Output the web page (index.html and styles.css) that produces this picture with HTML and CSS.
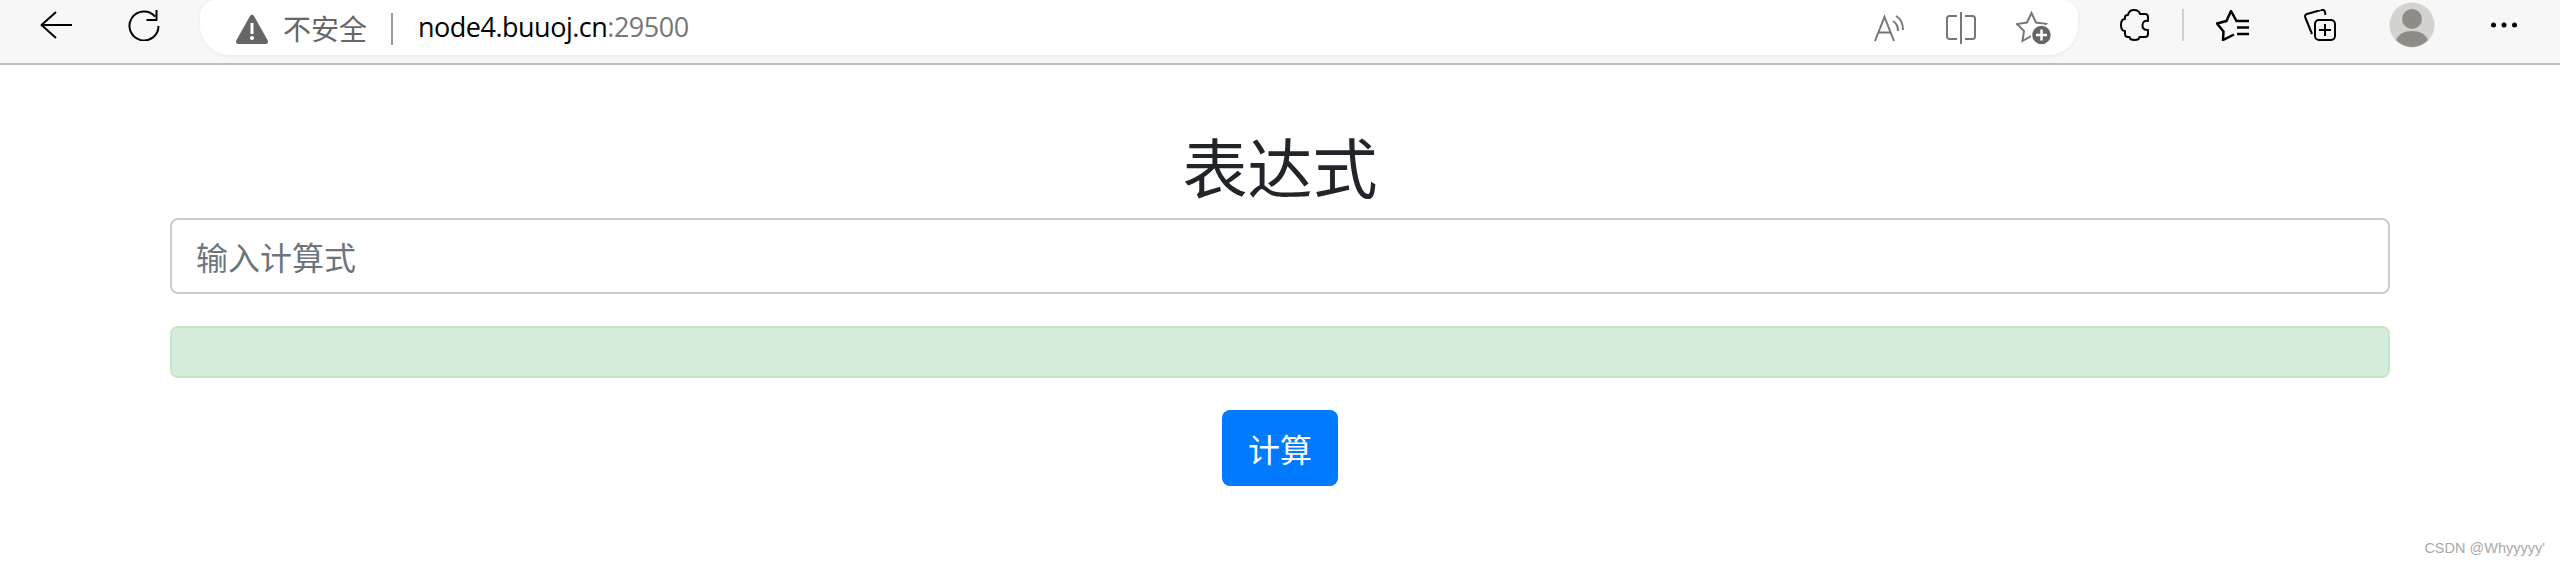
FILE: index.html
```html
<!DOCTYPE html>
<html>
<head>
  <meta charset="UTF-8">
  <title>表达式</title>
  <link rel="stylesheet" href="styles.css">
</head>
<body>
  <div class="toolbar">
    <svg class="icon icon--back" width="32" height="28" viewBox="0 0 32 28"><path d="M16 1 1.5 14 16 27M1.5 14H32"/></svg>
    <svg class="icon icon--reload" width="32" height="32" viewBox="0 0 32 32"><path d="M30.5 17A14.5 14.5 0 1 1 27 7.5M28.5 1v10h-10"/></svg>

    <div class="address">
      <svg class="address__warn" width="32" height="30" viewBox="0 0 32 30">
        <path fill="#666" d="M14 2Q16-1 18 2L31.5 26Q33 30 29 30H3Q-1 30 .5 26Z"/>
        <rect x="14.5" y="9" width="3" height="11" fill="#fff"/>
        <circle cx="16" cy="24" r="2" fill="#fff"/>
      </svg>
      <span class="address__status">不安全</span>
      <span class="address__sep"></span>
      <span class="address__url">node4.buuoj.cn<span class="address__port">:29500</span></span>

      <div class="address__tools">
        <svg class="tool tool--read" width="30" height="28" viewBox="0 0 30 28"><path d="M1 27 10.5 3 20 27M4.5 18.5h12M19 7q5 3 5 10M22 2q7 4 7 14"/></svg>
        <svg class="tool tool--split" width="30" height="32" viewBox="0 0 30 32"><path d="M11 4H3.5A2.5 2.5 0 0 0 1 6.5v18A2.5 2.5 0 0 0 3.5 27H11M19 4h7.5A2.5 2.5 0 0 1 29 6.5v18a2.5 2.5 0 0 1-2.5 2.5H19M15 0v32"/></svg>
        <svg class="tool tool--fav" width="36" height="34" viewBox="0 0 36 34">
          <path d="M15.5 2 20 11.5 30 13 23 20 24.5 30 15.5 25 6.5 30 8 20 1 13 11 11.5Z"/>
          <circle class="tool__badge" cx="25.5" cy="24" r="10"/>
          <path class="tool__plus" d="M25.5 18.5v11M20 24h11"/>
        </svg>
      </div>
    </div>

    <svg class="icon icon--ext" width="29" height="32" viewBox="0 0 29 32"><path d="M8 6Q9 1 14 1T20 5H25Q28 5 28 8V12Q23 11 22.500 16T28 21V25Q28 28 25 28H19.500Q19 31 14.500 31T9.500 28H8Q5 28 5 25V22Q1 22 1 16T5 10V8Q5 6 8 6Z"/></svg>
    <span class="toolbar__sep"></span>
    <svg class="icon icon--list" width="33" height="31" viewBox="0 0 33 31"><path class="icon__bars" d="M21 12 15 1 10.500 11 1 13.500 7.500 21.500 7 30 18 24.500"/><path class="icon__bars" d="M21 11H33M21 17.500H33M21 24H33"/></svg>
    <svg class="icon icon--collect" width="32" height="32" viewBox="0 0 32 32">
      <path d="M8 25 1.5 9Q0 6 3 5L17 1Q20 0 21 3L21.5 6"/>
      <rect x="11" y="11" width="20" height="20" rx="4"/>
      <path d="M21 15v12M15 21h12"/>
    </svg>
    <svg class="avatar" width="46" height="46" viewBox="0 0 46 46">
      <circle cx="23" cy="23" r="22.5" fill="#d3d2ce"/>
      <circle cx="23" cy="17" r="10" fill="#8f8b87"/>
      <path fill="#8f8b87" d="M7 38Q11 29 23 29T39 38Q32 45 23 45T7 38Z"/>
    </svg>
    <svg class="more" width="26" height="6" viewBox="0 0 26 6">
      <circle cx="2.5" cy="3" r="2.5"/><circle cx="13" cy="3" r="2.5"/><circle cx="23.5" cy="3" r="2.5"/>
    </svg>
  </div>

  <div class="container">
    <h1 class="title">表达式</h1>
    <input class="field" type="text" placeholder="输入计算式">
    <div class="result"></div>
    <div class="actions">
      <button class="btn" type="button">计算</button>
    </div>
  </div>

  <div class="watermark">CSDN @Whyyyyy'</div>
</body>
</html>
```

FILE: styles.css
```css
/* Browser chrome */
html, body {
  margin: 0;
  background: #fff;
}

body {
  font-family: "Noto Sans CJK SC", "Noto Sans", sans-serif;
  color: #212529;
}

.toolbar {
  display: flex;
  align-items: center;
  height: 50px;
  padding: 0 0 13px 40px;
  background: #f7f7f7;
  border-bottom: 2px solid #c0c0c0;
}

.icon path,
.icon rect {
  fill: none;
  stroke: #000;
  stroke-width: 2;
  stroke-linejoin: round;
}

.icon .icon__bars {
  stroke-width: 2.5;
}

.icon {
  flex: none;
}

.icon--reload {
  margin-left: 56px;
}

.icon--ext {
  margin-left: 42px;
}

.icon--list {
  margin-left: 32px;
}

.icon--collect {
  margin-left: 55px;
}

.toolbar__sep {
  width: 2px;
  height: 32px;
  margin-left: 33px;
  background: #d0d0d0;
}

.avatar {
  flex: none;
  margin-left: 53px;
}

.more {
  flex: none;
  margin-left: 56px;
}

/* Address pill */
.address {
  display: flex;
  flex: none;
  align-items: center;
  align-self: flex-start;
  box-sizing: border-box;
  width: 1878px;
  height: 55px;
  margin-left: 40px;
  padding: 0 26px 0 36px;
  background: #fff;
  border-radius: 16px 16px 30px 30px;
  box-shadow: 0 1px 4px rgba(0, 0, 0, 0.06);
}

.address__warn {
  flex: none;
  margin-top: 2px;
}

.address__status {
  margin-left: 15px;
  font-size: 28px;
  color: #666;
}

.address__sep {
  width: 2px;
  height: 32px;
  margin: 2px 0 0 24px;
  background: #999;
}

.address__url {
  margin: -3px 0 0 25px;
  font-family: "Open Sans", sans-serif;
  font-size: 27px;
  letter-spacing: -0.5px;
  color: #000;
}

.address__port {
  color: #767676;
}

.address__tools {
  display: flex;
  align-items: center;
  margin-left: auto;
}

.tool {
  flex: none;
}

.tool path {
  fill: none;
  stroke: #777;
  stroke-width: 2;
}

.tool--split {
  margin-left: 42px;
}

.tool--fav {
  margin-left: 40px;
}

.tool .tool__badge {
  fill: #666;
  stroke: #fff;
  stroke-width: 1.5;
}

.tool .tool__plus {
  stroke: #fff;
  stroke-width: 2.5;
}

/* Page */
.container {
  padding: 61px 170px 0;
  text-align: center;
}

.title {
  margin: 0 0 14px;
  font-size: 65px;
  font-weight: 400;
  line-height: 78px;
}

.field {
  display: block;
  box-sizing: border-box;
  width: 100%;
  height: 76px;
  padding: 0 24px;
  background: #fff;
  border: 2px solid #c8ced5;
  border-radius: 8px;
  font-family: inherit;
  font-size: 32px;
  color: #495057;
}

.field::placeholder {
  color: #6c757d;
  opacity: 1;
}

.result {
  box-sizing: border-box;
  height: 52px;
  margin-top: 32px;
  background: #d4edda;
  border: 2px solid #c3e6cb;
  border-radius: 8px;
}

.actions {
  margin-top: 32px;
}

.btn {
  width: 116px;
  height: 76px;
  padding: 0;
  background: #007bff;
  border: 0;
  border-radius: 8px;
  font-family: inherit;
  font-size: 32px;
  color: #fff;
}

/* Sits over the page corner */
.watermark {
  position: absolute;
  right: 15px;
  top: 540px;
  font-family: "Liberation Sans", Arial, sans-serif;
  font-size: 14.5px;
  color: #a8a8a8;
}
```
